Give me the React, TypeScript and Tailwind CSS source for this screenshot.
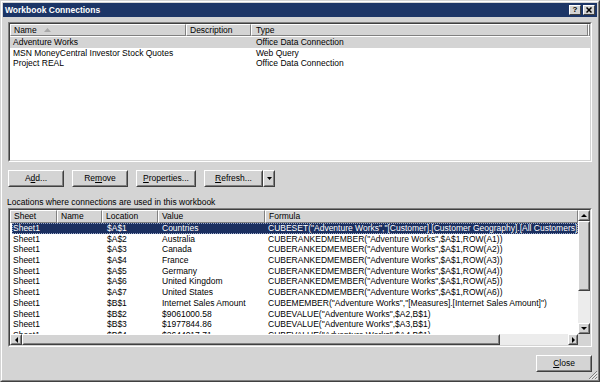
import React from 'react';

const raised =
  'border border-t-white border-l-white border-r-[#404040] border-b-[#404040] bg-[#d4d4d4]';
const raisedInner = 'border border-t-[#d4d4d4] border-l-[#d4d4d4] border-r-[#808080] border-b-[#808080]';

function Sunken({ className = '', children }: { className?: string; children: React.ReactNode }) {
  return (
    <div className={`border border-t-[#808080] border-l-[#808080] border-r-white border-b-white ${className}`}>
      <div className="h-full border border-t-[#404040] border-l-[#404040] border-r-[#d4d4d4] border-b-[#d4d4d4] bg-white overflow-hidden">
        {children}
      </div>
    </div>
  );
}

function Button({ w, children }: { w: string; children: React.ReactNode }) {
  return (
    <div className={`${raised} ${w} h-[17px]`}>
      <div className={`${raisedInner} h-full flex items-center justify-center`}>{children}</div>
    </div>
  );
}

function HeadCell({ w, children }: { w: string; children?: React.ReactNode }) {
  return (
    <div
      className={`${w} h-full shrink-0 border border-t-white border-l-white border-r-[#808080] border-b-[#808080] bg-[#d4d4d4] pl-[2px] flex items-center whitespace-nowrap overflow-hidden`}
    >
      {children}
    </div>
  );
}

function Arrow({ dir }: { dir: 'up' | 'down' | 'left' | 'right' }) {
  const pts = {
    up: '1,4 4,1 7,4',
    down: '1,1 4,4 7,1',
    left: '4,1 1,4 4,7',
    right: '1,1 4,4 1,7',
  }[dir];
  const vert = dir === 'up' || dir === 'down';
  return (
    <svg width={vert ? 8 : 5} height={vert ? 5 : 8} viewBox={vert ? '0 0 8 5' : '0 0 5 8'}>
      <polygon points={pts} fill="#000" />
    </svg>
  );
}

function ScrollBtn({ className, dir }: { className: string; dir: 'up' | 'down' | 'left' | 'right' }) {
  return (
    <div className={`${raised} ${className} shrink-0`}>
      <div className={`${raisedInner} h-full flex items-center justify-center`}>
        <Arrow dir={dir} />
      </div>
    </div>
  );
}

const connections = [
  { name: 'Adventure Works', type: 'Office Data Connection', sel: true },
  { name: 'MSN MoneyCentral Investor Stock Quotes', type: 'Web Query' },
  { name: 'Project REAL', type: 'Office Data Connection' },
];

const locations = [
  ['Sheet1', '', '$A$1', 'Countries', 'CUBESET("Adventure Works","[Customer].[Customer Geography].[All Customers].children")'],
  ['Sheet1', '', '$A$2', 'Australia', 'CUBERANKEDMEMBER("Adventure Works",$A$1,ROW(A1))'],
  ['Sheet1', '', '$A$3', 'Canada', 'CUBERANKEDMEMBER("Adventure Works",$A$1,ROW(A2))'],
  ['Sheet1', '', '$A$4', 'France', 'CUBERANKEDMEMBER("Adventure Works",$A$1,ROW(A3))'],
  ['Sheet1', '', '$A$5', 'Germany', 'CUBERANKEDMEMBER("Adventure Works",$A$1,ROW(A4))'],
  ['Sheet1', '', '$A$6', 'United Kingdom', 'CUBERANKEDMEMBER("Adventure Works",$A$1,ROW(A5))'],
  ['Sheet1', '', '$A$7', 'United States', 'CUBERANKEDMEMBER("Adventure Works",$A$1,ROW(A6))'],
  ['Sheet1', '', '$B$1', 'Internet Sales Amount', 'CUBEMEMBER("Adventure Works","[Measures].[Internet Sales Amount]")'],
  ['Sheet1', '', '$B$2', '$9061000.58', 'CUBEVALUE("Adventure Works",$A2,B$1)'],
  ['Sheet1', '', '$B$3', '$1977844.86', 'CUBEVALUE("Adventure Works",$A3,B$1)'],
  ['Sheet1', '', '$B$4', '$2644017.71', 'CUBEVALUE("Adventure Works",$A4,B$1)'],
];

const colW = ['w-[47px]', 'w-[45px]', 'w-[56px]', 'w-[107px]', 'w-[313px]'];

export default function App() {
  return (
    <div className="w-[600px] h-[382px] overflow-hidden bg-[#d4d4d4] font-['Liberation_Sans',Arial,sans-serif] text-[8.5px] leading-[10.7px] text-black border border-t-[#d4d4d4] border-l-[#d4d4d4] border-r-[#404040] border-b-[#404040]">
      <div className="h-full border border-t-white border-l-white border-r-[#808080] border-b-[#808080] p-px flex flex-col relative">
        {/* Title bar */}
        <div className="h-[14px] shrink-0 bg-[#1c3566] flex items-center justify-between pl-[2px] pr-[2px]">
          <span className="text-white font-bold text-[8.5px]">Workbook Connections</span>
          <div className="flex gap-[2px]">
            <div className={`${raised} w-[12px] h-[10px] flex items-center justify-center font-bold text-[8px] leading-none`}>?</div>
            <div className={`${raised} w-[12px] h-[10px] flex items-center justify-center`}>
              <svg width="6" height="6" viewBox="0 0 6 6">
                <path d="M0.5 0.5 L5.5 5.5 M5.5 0.5 L0.5 5.5" stroke="#000" strokeWidth="1.5" />
              </svg>
            </div>
          </div>
        </div>

        <div className="flex-1 flex flex-col px-[5px]">
          {/* Connections list */}
          <Sunken className="mt-[5px] h-[140px]">
            <div className="h-[12px] flex">
              <HeadCell w="w-[176px]">
                <span className="pl-px">Name</span>
                <svg width="7" height="4" viewBox="0 0 7 4" className="ml-[7px]">
                  <polygon points="0,4 3.5,0 7,4" fill="#a8a8a8" />
                </svg>
              </HeadCell>
              <HeadCell w="w-[65px]">
                <span className="pl-px">Description</span>
              </HeadCell>
              <HeadCell w="w-[337px]">
                <span className="pl-[2px]">Type</span>
              </HeadCell>
              <div className="flex-1 bg-[#d4d4d4] border border-t-white border-l-white border-r-[#808080] border-b-[#808080]" />
            </div>
            <div className="pt-px">
              {connections.map((c) => (
                <div key={c.name} className={`h-[10.7px] flex whitespace-nowrap ${c.sel ? 'bg-[#d4d4d4]' : ''}`}>
                  <div className="w-[241px] pl-[3px]">{c.name}</div>
                  <div className="pl-[5px]">{c.type}</div>
                </div>
              ))}
            </div>
          </Sunken>

          {/* Buttons */}
          <div className="mt-[8px] flex gap-[8px]">
            <Button w="w-[56px]">
              A<span className="underline">d</span>d...
            </Button>
            <Button w="w-[56px]">
              Re<span className="underline">m</span>ove
            </Button>
            <Button w="w-[60px]">
              <span className="underline">P</span>roperties...
            </Button>
            <div className="flex">
              <Button w="w-[59px]">
                <span className="underline">R</span>efresh...
              </Button>
              <div className={`${raised} w-[12px] h-[17px]`}>
                <div className={`${raisedInner} h-full flex items-center justify-center`}>
                  <svg width="5" height="3" viewBox="0 0 5 3">
                    <polygon points="0,0 5,0 2.5,3" fill="#000" />
                  </svg>
                </div>
              </div>
            </div>
          </div>

          <div className="mt-[10px] h-[11px] pl-[-1px] -ml-px">Locations where connections are used in this workbook</div>

          {/* Locations list */}
          <Sunken className="h-[139px]">
            <div className="flex h-full">
              <div className="w-[568px] flex flex-col">
                <div className="h-[13px] flex shrink-0">
                  {['Sheet', 'Name', 'Location', 'Value', 'Formula'].map((h, i) => (
                    <HeadCell key={h} w={colW[i]}>
                      <span className="pl-px">{h}</span>
                    </HeadCell>
                  ))}
                </div>
                <div className="flex-1 overflow-hidden pl-[2px]">
                  {locations.map((r, idx) => (
                    <div
                      key={idx}
                      className={`h-[10.7px] flex whitespace-nowrap ${
                        idx === 0 ? 'bg-[#1b2f5f] text-white outline-1 outline-dotted outline-[#9aa8c8] -outline-offset-1' : ''
                      }`}
                    >
                      <div className="w-[45px] pl-px overflow-hidden">{r[0]}</div>
                      <div className="w-[45px] overflow-hidden">{r[1]}</div>
                      <div className="w-[56px] pl-[5px] overflow-hidden">{r[2]}</div>
                      <div className="w-[107px] pl-[4px] overflow-hidden">{r[3]}</div>
                      <div className="w-[313px] pl-[3px] overflow-hidden">{r[4]}</div>
                    </div>
                  ))}
                </div>
                {/* horizontal scrollbar */}
                <div className="h-[11px] flex shrink-0 bg-[#ececec]">
                  <ScrollBtn className="w-[12px] h-full" dir="left" />
                  <div className={`${raised} w-[478px] h-full`}>
                    <div className={`${raisedInner} h-full`} />
                  </div>
                  <div className="flex-1" />
                  <ScrollBtn className="w-[10px] h-full" dir="right" />
                </div>
              </div>
              {/* vertical scrollbar */}
              <div className="w-[12px] flex flex-col bg-[#ececec]">
                <ScrollBtn className="h-[11px] w-full" dir="up" />
                <div className={`${raised} h-[70px] w-full`}>
                  <div className={`${raisedInner} h-full`} />
                </div>
                <div className="flex-1" />
                <ScrollBtn className="h-[11px] w-full" dir="down" />
                <div className="h-[11px] bg-[#d4d4d4]" />
              </div>
            </div>
          </Sunken>

          <div className="mt-[8px] flex justify-end">
            <Button w="w-[56px]">
              <span className="underline">C</span>lose
            </Button>
          </div>
        </div>

        {/* size grip */}
        <svg width="10" height="10" viewBox="0 0 10 10" className="absolute right-0 bottom-0">
          <path d="M9 1 L1 9 M9 4 L4 9 M9 7 L7 9" stroke="#808080" strokeWidth="1" />
          <path d="M9.8 1.8 L1.8 9.8 M9.8 4.8 L4.8 9.8 M9.8 7.8 L7.8 9.8" stroke="#fff" strokeWidth="0.8" />
        </svg>
      </div>
    </div>
  );
}
